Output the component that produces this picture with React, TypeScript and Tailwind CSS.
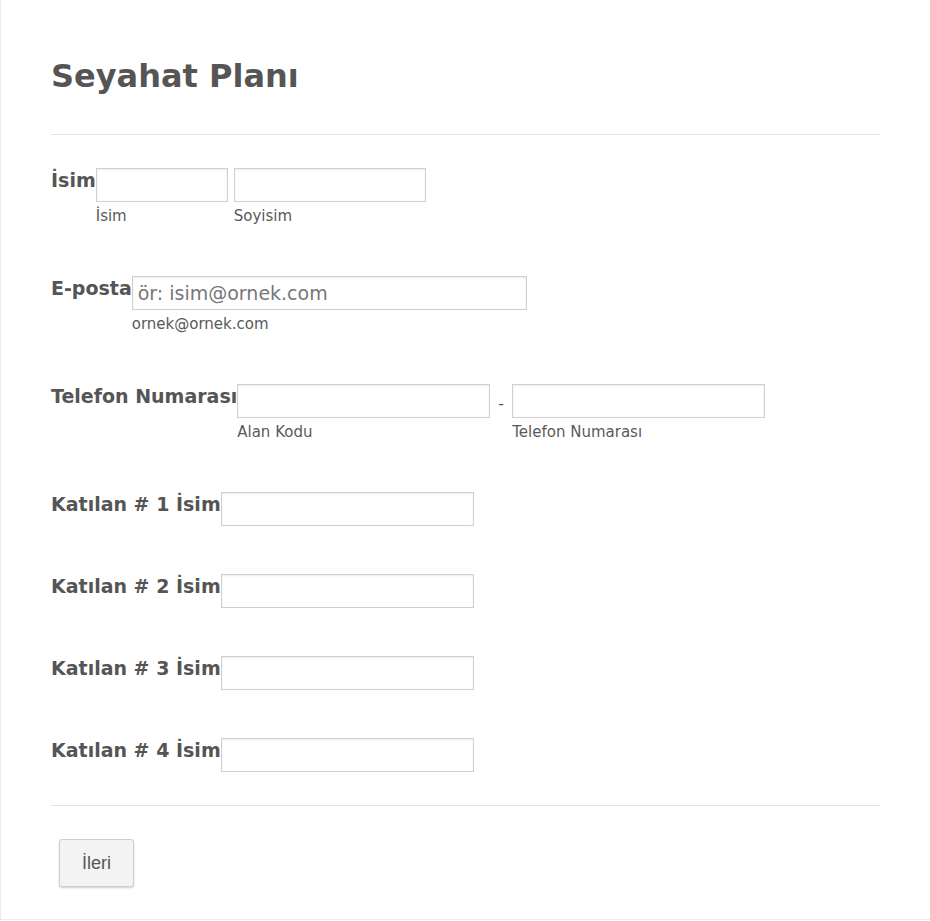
const font = { fontFamily: '"DejaVu Sans", Verdana, sans-serif' };

function Field({
  label,
  children,
}: {
  label: string;
  children: React.ReactNode;
}) {
  return (
    <li className="flex items-start py-6">
      <label className="shrink-0 pt-[1px] text-[19px] leading-[22px] font-bold text-[#555]">
        {label}
      </label>
      {children}
    </li>
  );
}

function TextBox({ width, placeholder }: { width: string; placeholder?: string }) {
  return (
    <input
      type="text"
      placeholder={placeholder}
      className={`${width} h-[34px] border border-[#d0d0d0] bg-white px-[5px] text-[19px] text-[#555] shadow-[inset_0_1px_2px_rgba(0,0,0,0.08)] outline-none placeholder:text-[#777]`}
      style={font}
    />
  );
}

function SubLabel({ text }: { text: string }) {
  return <span className="mt-[4px] mb-[2px] block text-[15px] leading-[20px] text-[#5a5a5a]">{text}</span>;
}

export default function App() {
  return (
    <div className="min-h-[921px] bg-white" style={font}>
      <div className="h-[920px] border-b border-l border-[#ececec] bg-white px-[50px] pt-[58px]">
        <h1 className="pb-[40px] text-[32px] leading-[36px] font-bold text-[#555]">Seyahat Planı</h1>
        <div className="border-t border-[#e3e3e3] pt-[9px]">
          <ul>
            <Field label="İsim">
              <div className="flex gap-[6px]">
                <div className="flex flex-col">
                  <TextBox width="w-[132px]" />
                  <SubLabel text="İsim" />
                </div>
                <div className="flex flex-col">
                  <TextBox width="w-[192px]" />
                  <SubLabel text="Soyisim" />
                </div>
              </div>
            </Field>
            <Field label="E-posta">
              <div className="flex flex-col">
                <TextBox width="w-[395px]" placeholder="ör: isim@ornek.com" />
                <SubLabel text="ornek@ornek.com" />
              </div>
            </Field>
            <Field label="Telefon Numarası">
              <div className="flex">
                <div className="flex flex-col">
                  <TextBox width="w-[253px]" />
                  <SubLabel text="Alan Kodu" />
                </div>
                <span className="w-[22px] pt-[8px] text-center text-[16px] text-[#555]">-</span>
                <div className="flex flex-col">
                  <TextBox width="w-[253px]" />
                  <SubLabel text="Telefon Numarası" />
                </div>
              </div>
            </Field>
            {[1, 2, 3, 4].map((n) => (
              <Field key={n} label={`Katılan # ${n} İsim`}>
                <TextBox width="w-[253px]" />
              </Field>
            ))}
          </ul>
        </div>
        <div className="mt-[9px] border-t border-[#e3e3e3] pt-[33px] pl-[8px]">
          <button
            type="button"
            className="h-[48px] w-[75px] rounded-[3px] border border-[#cfcfcf] bg-[#f3f3f3] text-[18px] text-[#555] shadow-[0_1px_2px_rgba(0,0,0,0.2)]"
            style={{ fontFamily: '"Liberation Sans", Arial, sans-serif' }}
          >
            İleri
          </button>
        </div>
      </div>
    </div>
  );
}
